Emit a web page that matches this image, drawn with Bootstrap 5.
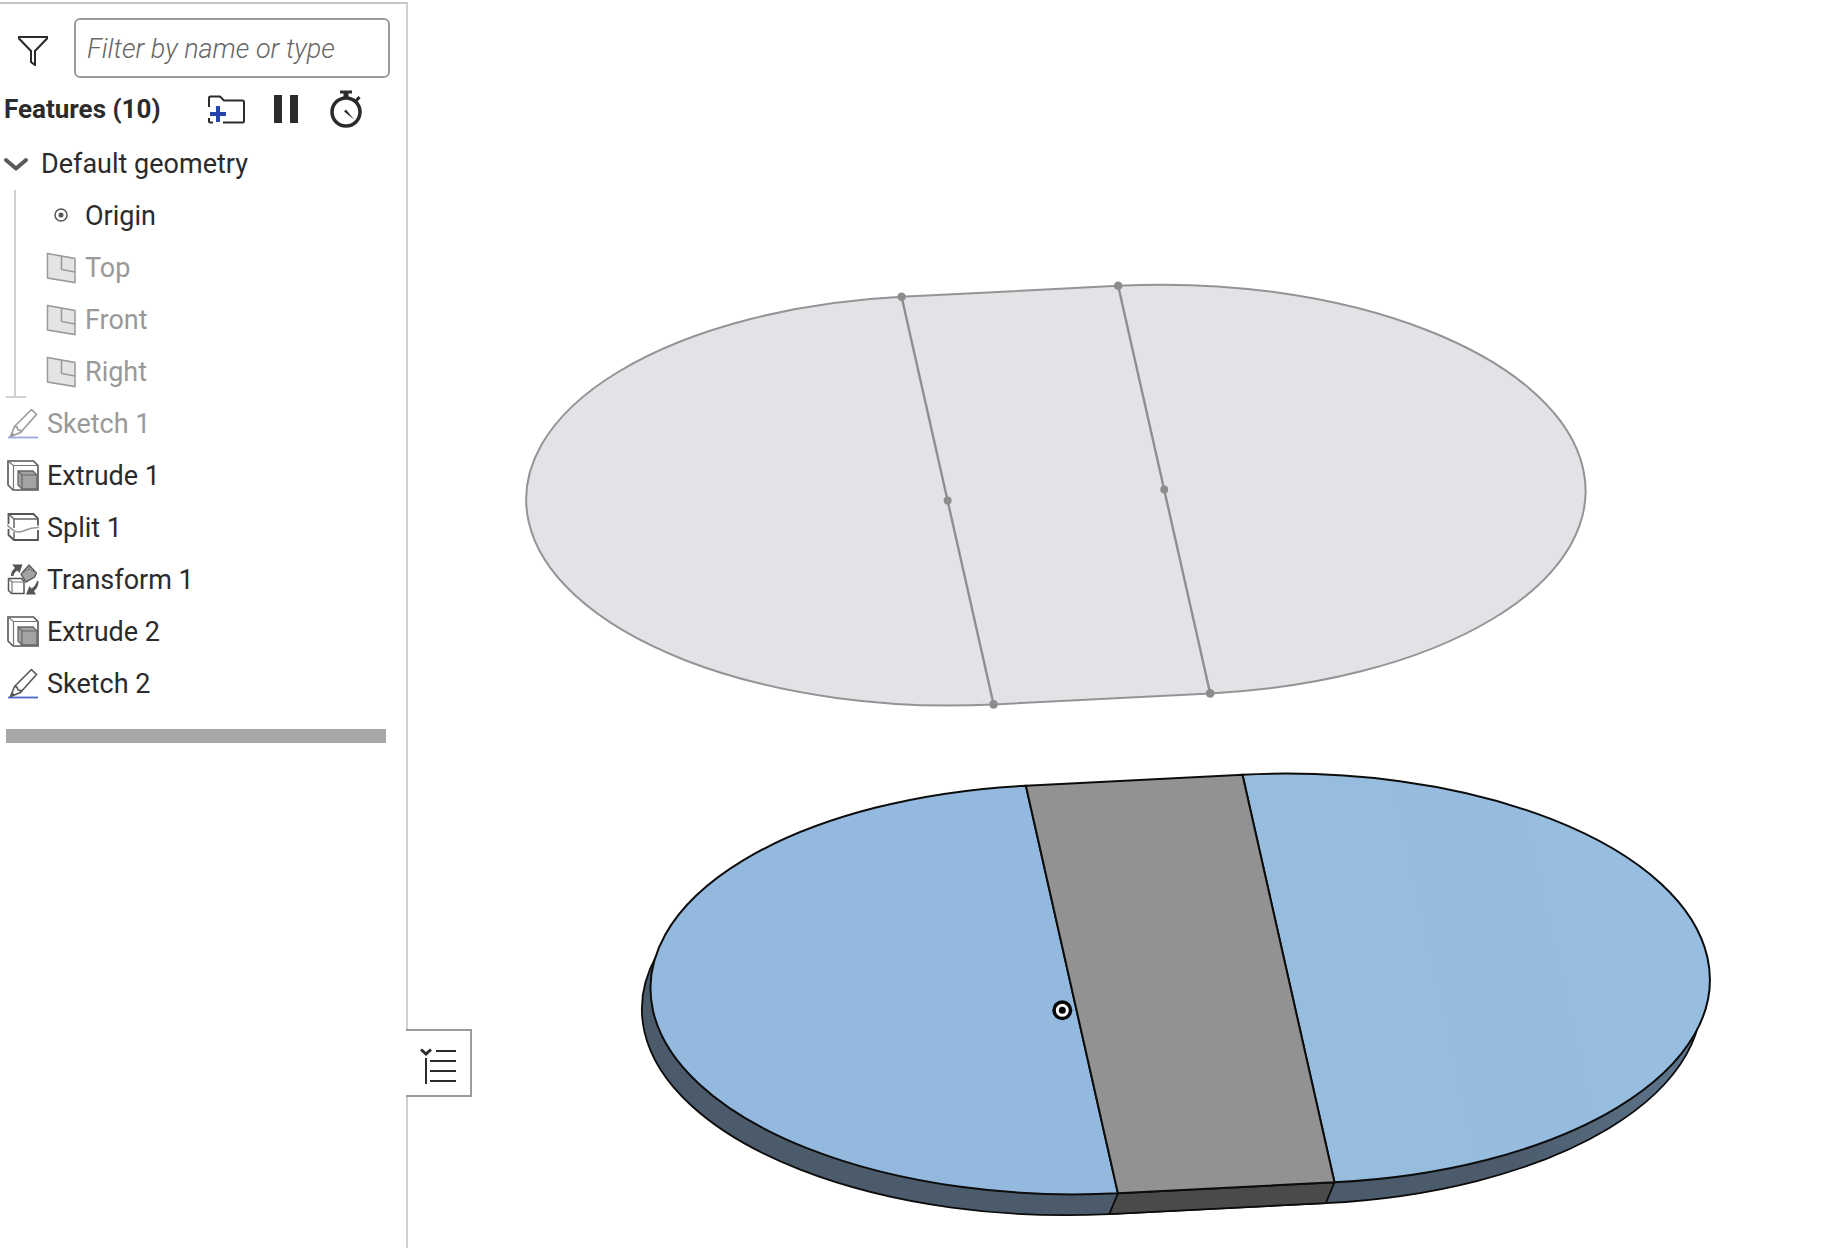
<!DOCTYPE html>
<html lang="en">
<head>
<meta charset="utf-8">
<meta name="viewport" content="width=device-width, initial-scale=1">
<title>Part Studio</title>
<link rel="stylesheet" href="https://cdn.jsdelivr.net/npm/bootstrap@5.3.0/dist/css/bootstrap.min.css">
<style>
  body { font-family: Roboto, "Liberation Sans", sans-serif; font-size: 27px; line-height: 32px; color: #2b2b2b; background: #fff; }
  .feature-panel { width: 408px; margin-top: 2px; border-top: 2px solid #c6c6c6; border-right: 2px solid #cfcfcf; }
  .filter-row { padding: 14px 16px 0 17px; gap: 25px; }
  .filter-row .icon-btn { padding-top: 3px; }
  .filter-box { height: 60px; padding: 2px 12px 0 11px; font-size: 27px; border: 2px solid #9b9b9b; border-radius: 6px; }
  .filter-box::placeholder { color: #666; font-style: italic; font-weight: 300; opacity: 1; }
  .head-row { height: 60px; padding: 2px 0 0 4px; }
  .head-title { font-size: 26px; line-height: 32px; font-weight: 700; width: 202px; }
  .tool-set { gap: 25px; }
  .icon-btn { background: none; border: 0; padding: 0; display: flex; color: inherit; }
  .tree-row { height: 52px; gap: 8px; padding-left: 7px; }
  .tree-row.group-row { padding-left: 3px; gap: 12px; }
  .nested .tree-row { padding-left: 20px; gap: 7px; }
  .rail { width: 20px; margin-left: 6px; border-bottom: 2px solid #cfcfcf; }
  .rail::before { content: ""; display: block; width: 2px; height: 100%; margin-left: 8px; background: #cfcfcf; }
  .dimmed { color: #999; }
  .rollback { height: 14px; margin: 19px 20px 0 6px; background: #a6a6a6; }
  .tree-toggle { left: 406px; bottom: 151px; width: 66px; height: 68px; background: #fff; border: 2px solid #9b9b9b; border-left: 0; padding: 0; }
  .edge { vector-effect: non-scaling-stroke; }
</style>
<script src="https://cdn.jsdelivr.net/npm/bootstrap@5.3.0/dist/js/bootstrap.bundle.min.js"></script>
</head>
<body>
<svg width="0" height="0" class="position-absolute" aria-hidden="true">
  <symbol id="i-plane" viewBox="0 0 32 32"><path d="M1.500 1.500 29 6.500v24L1.500 26z" fill="#e4e4e4" stroke="#999" stroke-width="1.500"/><path d="M15.500 4v13.500l13.500 2.500" fill="none" stroke="#999" stroke-width="1.500"/></symbol>
  <symbol id="i-pencil" viewBox="0 0 32 32"><g fill="none" stroke="currentColor" stroke-width="1.600" stroke-linejoin="round"><path d="M24.500 1.500 29.500 6.500 13.500 24.500 3.500 28.500 7.500 18.500z"/><path d="M7.500 18.500 10 19l1 3 3 .5-.5 2"/></g><path d="M3 29l2-5 3 3z" fill="currentColor"/></symbol>
  <symbol id="i-extrude" viewBox="0 0 32 32"><path d="M1 1h25.500L31 5.500V30H6L1 25z" fill="#fff" stroke="#555" stroke-width="1.600"/><path d="M1 1l5.500 4.500V30M6.500 5.500H31" fill="none" stroke="#777" stroke-width="1.200"/><path d="M11 11h15l4 4v14H15l-4-4z" fill="#a3a3a3" stroke="#666" stroke-width="1.300"/><path d="M11 11l4 4v14M15 15h15" fill="none" stroke="#666" stroke-width="1.200"/></symbol>
  <symbol id="i-split" viewBox="0 0 32 32"><path d="M1.500 12V2h25L31 6.500v7M1.500 17v6L7 28H31V18" fill="none" stroke="#555" stroke-width="1.800"/><path d="M1.500 2 7 7H31M7 7v9M7 20v8" fill="none" stroke="#666" stroke-width="1.500"/><path d="M0 13c4 3 6 7 12 7s8-5 20-4.500" fill="none" stroke="#999" stroke-width="1.600"/></symbol>
  <symbol id="i-transform" viewBox="0 0 32 32"><path d="M1.500 14.500h13l2.500 3V29.500H4.500l-3-3z" fill="#fff" stroke="#555" stroke-width="1.500"/><path d="M1.500 14.500l3.500 3.500v11.500M5 18h12" fill="none" stroke="#777" stroke-width="1.200"/><path d="M22 1l7.500 8-2 4L19 18l-5-8z" fill="#a3a3a3" stroke="#555" stroke-width="1.300"/><path d="M22 1v4l-8 5M22 5l7.500 4" fill="none" stroke="#777"/><path d="M4 12c0-4 1.500-6 4-8L5 0.500h10.500L12.500 9 10.500 6.500C8 8 7 9 6.500 12zM30 17h1.500c0 5-2 8-4.500 10l2 3.500H19l3.500-8.500 2 2.500c3-2 4.500-4 5.500-7.500z" fill="#555"/></symbol>
</svg>

<div class="d-flex vh-100 overflow-hidden position-relative">
  <aside class="feature-panel flex-shrink-0">
    <div class="filter-row d-flex align-items-center">
      <button class="icon-btn" type="button" aria-label="Filter options">
        <svg width="32" height="32" viewBox="0 0 32 32" fill="none" stroke="#2b2b2b" stroke-width="2"><path d="M2 3H30V4.500L18 17V31L14 28V17L2 4.500z"/></svg>
      </button>
      <input class="filter-box form-control" type="text" placeholder="Filter by name or type" aria-label="Filter by name or type">
    </div>
    <div class="head-row d-flex align-items-center">
      <h1 class="head-title m-0">Features (10)</h1>
      <div class="tool-set d-flex align-items-center">
        <button class="icon-btn" type="button" aria-label="New folder">
          <svg width="40" height="38" viewBox="0 0 40 38" fill="none" stroke="#2b2b2b" stroke-width="2"><path d="M3 17V8q0-1.500 1.500-1.500H14l4 4H36.500q1.500 0 1.500 1.500V31q0 1.500-1.500 1.500H17M3 28v3q0 1.500 1.500 1.500H7"/><path d="M12 16v16M4 24h16" stroke="#2545ad" stroke-width="4"/></svg>
        </button>
        <button class="icon-btn" type="button" aria-label="Pause">
          <svg width="32" height="38" viewBox="0 0 32 38" fill="#2b2b2b"><path d="M3 5h8v28H3zM19 5h8v28h-8z"/></svg>
        </button>
        <button class="icon-btn" type="button" aria-label="Regeneration times">
          <svg width="36" height="38" viewBox="0 0 36 38" fill="none" stroke="#2b2b2b"><circle cx="18" cy="22" r="14" stroke-width="3.500"/><path d="M12 2H24M28 11l3.500-4" stroke-width="3"/><path d="M18 2v6" stroke-width="5"/><path d="M16 21.500l2-2 8 10z" fill="#2b2b2b" stroke="none"/></svg>
        </button>
      </div>
    </div>

    <ul class="list-unstyled m-0">
      <li>
        <div class="tree-row group-row d-flex align-items-center">
          <button class="icon-btn" type="button" aria-label="Collapse Default geometry" aria-expanded="true"><svg width="26" height="20" viewBox="0 0 26 20" fill="none" stroke="#5a5a5a" stroke-width="4" stroke-linecap="round" stroke-linejoin="round"><path d="M3 6l10 8.500L23 6"/></svg></button>
          <span>Default geometry</span>
        </div>
        <div class="d-flex">
          <div class="rail"></div>
          <ul class="nested list-unstyled m-0">
            <li class="tree-row d-flex align-items-center"><svg width="32" height="32" viewBox="0 0 32 32"><circle cx="15" cy="15" r="6" fill="none" stroke="#555" stroke-width="1.500"/><circle cx="15" cy="15" r="2.500" fill="#555"/></svg><span>Origin</span></li>
            <li class="tree-row d-flex align-items-center dimmed"><svg width="32" height="32"><use href="#i-plane"/></svg><span>Top</span></li>
            <li class="tree-row d-flex align-items-center dimmed"><svg width="32" height="32"><use href="#i-plane"/></svg><span>Front</span></li>
            <li class="tree-row d-flex align-items-center dimmed"><svg width="32" height="32"><use href="#i-plane"/></svg><span>Right</span></li>
          </ul>
        </div>
      </li>
      <li class="tree-row d-flex align-items-center dimmed"><svg width="32" height="32" viewBox="0 0 32 32"><path d="M1 29.500h30" stroke="#9aa9df" stroke-width="1.800"/><use href="#i-pencil"/></svg><span>Sketch 1</span></li>
      <li class="tree-row d-flex align-items-center"><svg width="32" height="32"><use href="#i-extrude"/></svg><span>Extrude 1</span></li>
      <li class="tree-row d-flex align-items-center"><svg width="32" height="32"><use href="#i-split"/></svg><span>Split 1</span></li>
      <li class="tree-row d-flex align-items-center"><svg width="32" height="32"><use href="#i-transform"/></svg><span>Transform 1</span></li>
      <li class="tree-row d-flex align-items-center"><svg width="32" height="32"><use href="#i-extrude"/></svg><span>Extrude 2</span></li>
      <li class="tree-row d-flex align-items-center"><svg width="32" height="32" viewBox="0 0 32 32" color="#555"><path d="M1 29.500h30" stroke="#4a65c4" stroke-width="1.800"/><use href="#i-pencil"/></svg><span>Sketch 2</span></li>
    </ul>
    <div class="rollback"></div>
  </aside>

  <main class="flex-grow-1 overflow-hidden">
    <svg class="d-block w-100 h-100" viewBox="408 0 1426 1248" role="img" aria-label="Model view">
      <defs>
        <linearGradient id="wall" gradientUnits="userSpaceOnUse" x1="0" y1="0" x2="1.500" y2="0"><stop offset="0" stop-color="#4b5b6b"/><stop offset=".65" stop-color="#4b5b6b"/><stop offset="1" stop-color="#60788f"/></linearGradient>
        <linearGradient id="sheen" x1="0" y1="0" x2="1" y2="0"><stop offset="0" stop-color="#96bdde"/><stop offset=".35" stop-color="#96bcde"/><stop offset=".62" stop-color="#96bbdf"/><stop offset=".68" stop-color="#97bddf"/><stop offset="1" stop-color="#97bde0"/></linearGradient>
        <path id="stadium" class="edge" d="M0-1H.517A1 1 0 0 1 .517 1H0A1 1 0 0 1 0-1z"/>
      </defs>
      <!-- flat sketch -->
      <g transform="matrix(418.900 -21.200 46 203.800 947.600 500.600)" fill="#e2e3e7" stroke="#949494" stroke-width="2">
        <use href="#stadium"/>
        <path class="edge" d="M0-1V1M.517-1V1" stroke="#8f8f8f" stroke-width="2.400"/>
      </g>
      <g fill="#8c8c8c"><circle cx="901.600" cy="296.800" r="4.300"/><circle cx="947.600" cy="500.600" r="4"/><circle cx="993.600" cy="704.400" r="4.300"/><circle cx="1118.200" cy="285.800" r="4.300"/><circle cx="1164.200" cy="489.600" r="4"/><circle cx="1210.200" cy="693.400" r="4.300"/></g>
      <!-- solid body -->
      <g transform="matrix(418.900 -21.200 46 203.800 1063.300 1010.300)" stroke="#0c0c0c" stroke-width="1.800"><use href="#stadium" fill="url(#wall)"/></g>
      <path d="M1117.900 1193.300 1334.500 1182.300 1325.900 1203.100 1109.300 1214.100z" fill="#4a4a4a" stroke="#0c0c0c" stroke-width="1.800"/>
      <g transform="matrix(418.900 -21.200 46 203.800 1071.900 989.500)" stroke="#0c0c0c" stroke-width="2">
        <path class="edge" d="M0 1A1 1 0 0 1 0-1z" fill="#94b9de"/>
        <path class="edge" d="M.517-1A1 1 0 0 1 .517 1z" fill="url(#sheen)"/>
        <path class="edge" d="M0-1H.517V1H0z" fill="#929292"/>
      </g>
      <circle cx="1062.300" cy="1010.300" r="10" fill="#050505"/><circle cx="1062.300" cy="1010.300" r="5" fill="#050505" stroke="#fff" stroke-width="3"/>
    </svg>
  </main>

  <button class="tree-toggle position-absolute" type="button" aria-label="Toggle feature list">
    <svg class="d-block" width="64" height="64" viewBox="0 0 64 64" fill="none" stroke="#2b2b2b" stroke-width="2"><path d="M30 20H50M24 30H50M24 40H50M24 50H50M20 27V53"/><path d="M15 18.500l5 4.500 5-4.500" stroke-width="3"/></svg>
  </button>
</div>
</body>
</html>
